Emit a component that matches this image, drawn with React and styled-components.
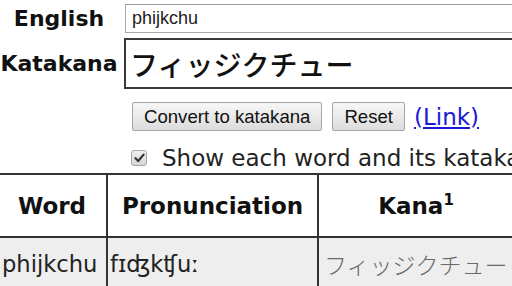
import React from 'react';
import styled, { createGlobalStyle } from 'styled-components';

const GlobalStyle = createGlobalStyle`
  html, body {
    margin: 0;
    padding: 0;
    background: #fff;
    overflow: hidden;
  }
  body {
    width: 512px;
    height: 286px;
    font-family: "DejaVu Sans", Verdana, sans-serif;
    color: #111;
  }
`;

const Page = styled.div`
  width: 512px;
  height: 286px;
  overflow: hidden;
  padding-top: 4px;
  box-sizing: border-box;
`;

const Form = styled.div`
  display: grid;
  grid-template-columns: 118px 400px;
  column-gap: 6px;
  row-gap: 5px;
  align-items: center;
`;

const Label = styled.label`
  font-weight: bold;
  font-size: 22px;
  text-align: center;
  white-space: nowrap;
  color: #111;
`;

const TextInput = styled.input`
  box-sizing: border-box;
  height: 29px;
  width: 420px;
  margin-left: 1px;
  border: 1px solid #a9a9a9;
  border-top-color: #999;
  padding: 0 6px;
  font-family: "Liberation Sans", Arial, sans-serif;
  font-size: 18px;
  color: #222;
  outline: none;
`;

const KanaBox = styled.div`
  box-sizing: border-box;
  height: 51px;
  width: 420px;
  border: 2px solid #3a3a3a;
  padding-left: 4px;
  display: flex;
  align-items: center;
  font-family: "Noto Sans CJK JP", sans-serif;
  font-weight: 500;
  font-size: 28px;
  color: #111;
  white-space: nowrap;
`;

const Controls = styled.div`
  padding-left: 132px;
  margin-top: 13px;
`;

const ButtonRow = styled.div`
  display: flex;
  align-items: center;
  gap: 10px;
  height: 29px;
`;

const Button = styled.button`
  box-sizing: border-box;
  height: 29px;
  padding: 0 11px;
  border: 1px solid #a6a6a6;
  border-radius: 2px;
  background: linear-gradient(#f7f7f7, #dcdcdc);
  font-family: "Liberation Sans", Arial, sans-serif;
  font-size: 18.6px;
  color: #111;
  white-space: nowrap;
`;

const Link = styled.a`
  margin-left: -1px;
  font-size: 23px;
  color: #1a1ad6;
  text-decoration: underline;
  white-space: nowrap;
`;

const CheckRow = styled.div`
  display: flex;
  align-items: center;
  gap: 15px;
  margin-top: 16px;
  margin-left: -1px;
  white-space: nowrap;
  font-size: 23px;
  color: #222;
  height: 22px;
`;

const CheckBox = styled.span`
  box-sizing: border-box;
  flex: none;
  width: 16px;
  height: 16px;
  border: 1px solid #a8a8a8;
  border-radius: 3px;
  background: linear-gradient(#f0f0f0, #d6d6d6);
  display: flex;
  align-items: center;
  justify-content: center;
`;

const Table = styled.table`
  margin-top: 4px;
  margin-left: -4px;
  border-collapse: collapse;
  table-layout: fixed;
  width: 517px;
`;

const Th = styled.th`
  border: 2px solid #333;
  height: 61px;
  padding: 0;
  font-size: 23px;
  font-weight: bold;
  text-align: center;
  color: #111;
  white-space: nowrap;
`;

const Sup = styled.sup`
  font-size: 15px;
  vertical-align: 9px;
  line-height: 0;
`;

const Td = styled.td`
  border: 2px solid #333;
  background: #eeeeee;
  height: 52px;
  padding: 0 0 4px ${p => p.$pad || 5}px;
  font-size: 22.6px;
  color: ${p => p.$muted ? '#6a6a6a' : '#222'};
  font-family: ${p => p.$jp ? '"Noto Sans CJK JP", sans-serif' : '"DejaVu Sans", Verdana, sans-serif'};
  font-weight: ${p => p.$jp ? 300 : 'normal'};
  white-space: nowrap;
  overflow: hidden;
  vertical-align: middle;
`;

const KanaText = styled.span`
  font-size: 23px;
`;

export default function App() {
  return (
    <Page>
      <GlobalStyle />
      <Form>
        <Label>English</Label>
        <TextInput defaultValue="phijkchu" />
        <Label>Katakana</Label>
        <KanaBox>フィッジクチュー</KanaBox>
      </Form>
      <Controls>
        <ButtonRow>
          <Button>Convert to katakana</Button>
          <Button>Reset</Button>
          <Link href="#">(Link)</Link>
        </ButtonRow>
        <CheckRow>
          <CheckBox>
            <svg width="11" height="10" viewBox="0 0 11 10">
              <path d="M1.5 5.2 L4.2 8 L9.6 1.6" fill="none" stroke="#333" strokeWidth="2.2" strokeLinecap="round" strokeLinejoin="round" />
            </svg>
          </CheckBox>
          <span>Show each word and its katakana</span>
        </CheckRow>
      </Controls>
      <Table>
        <colgroup>
          <col style={{ width: 110 }} />
          <col style={{ width: 211 }} />
          <col style={{ width: 196 }} />
        </colgroup>
        <thead>
          <tr>
            <Th>Word</Th>
            <Th>Pronunciation</Th>
            <Th>Kana<Sup>1</Sup></Th>
          </tr>
        </thead>
        <tbody>
          <tr>
            <Td $pad={4}>phijkchu</Td>
            <Td $pad={2}>fɪʤkʧuː</Td>
            <Td $pad={5} $jp $muted><KanaText>フィッジクチュー</KanaText></Td>
          </tr>
        </tbody>
      </Table>
    </Page>
  );
}
